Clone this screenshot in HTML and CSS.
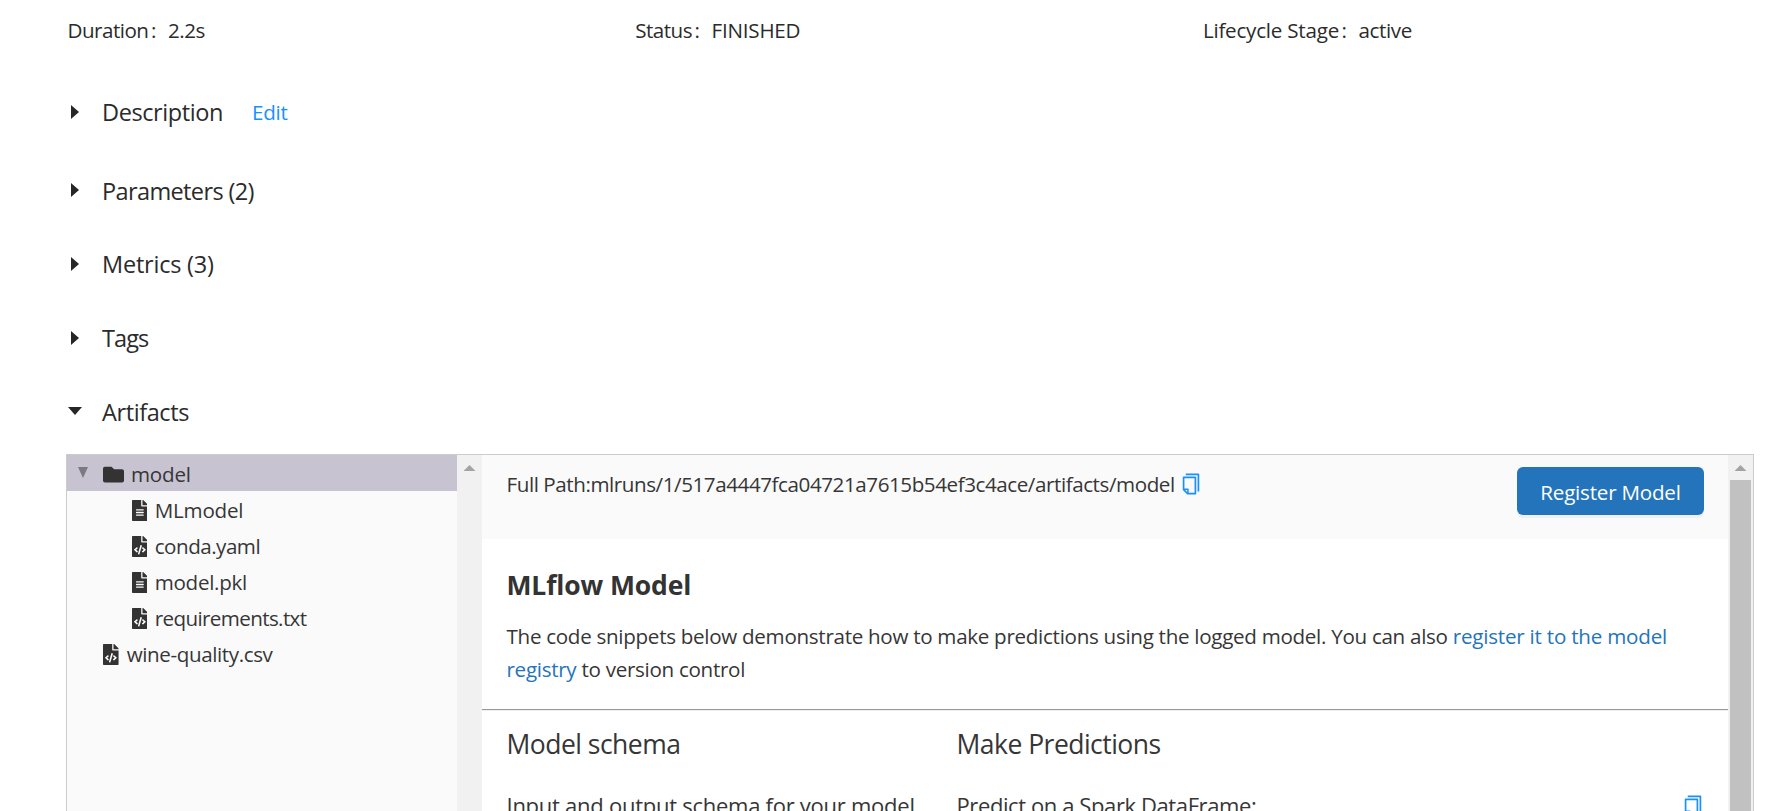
FILE: index.html
```html
<!DOCTYPE html>
<html lang="en">
<head>
<meta charset="utf-8">
<title>MLflow Run</title>
<link rel="stylesheet" href="styles.css">
</head>
<body>
<svg class="defs" width="0" height="0" aria-hidden="true">
  <symbol id="copy" viewBox="0 0 1024 1024"><path d="M832 64H296c-4.400 0-8 3.600-8 8v56c0 4.400 3.600 8 8 8h496v688c0 4.400 3.600 8 8 8h56c4.400 0 8-3.600 8-8V96c0-17.700-14.300-32-32-32zM704 192H192c-17.700 0-32 14.300-32 32v530.700c0 8.500 3.400 16.600 9.400 22.600l173.300 173.300c2.200 2.200 4.700 4 7.400 5.500v1.900h4.200c3.500 1.300 7.200 2 11 2H704c17.700 0 32-14.300 32-32V224c0-17.700-14.300-32-32-32zM350 856.200L263.900 770H350v86.200zM664 888H414V746c0-22.100-17.900-40-40-40H232V264h432v624z"/></symbol>
  <symbol id="folder" viewBox="0 0 512 512"><path d="M464 128H272l-64-64H48C21.490 64 0 85.490 0 112v288c0 26.510 21.490 48 48 48h416c26.510 0 48-21.490 48-48V176c0-26.510-21.490-48-48-48z"/></symbol>
  <symbol id="file" viewBox="0 0 384 512"><path d="M224 136V0H24C10.700 0 0 10.700 0 24v464c0 13.300 10.700 24 24 24h336c13.300 0 24-10.700 24-24V160H248c-13.200 0-24-10.800-24-24zm64 236c0 6.600-5.400 12-12 12H108c-6.600 0-12-5.400-12-12v-8c0-6.600 5.400-12 12-12h168c6.600 0 12 5.400 12 12v8zm0-64c0 6.600-5.400 12-12 12H108c-6.600 0-12-5.400-12-12v-8c0-6.600 5.400-12 12-12h168c6.600 0 12 5.400 12 12v8zm0-72v8c0 6.600-5.400 12-12 12H108c-6.600 0-12-5.400-12-12v-8c0-6.600 5.400-12 12-12h168c6.600 0 12 5.400 12 12zm96-114.100v6.100H256V0h6.100c6.400 0 12.500 2.500 17 7l97.900 98c4.500 4.500 7 10.600 7 16.900z"/></symbol>
  <symbol id="code" viewBox="0 0 384 512"><path d="M384 121.941V128H256V0h6.059c6.365 0 12.470 2.529 16.971 7.029l97.941 97.941A24.005 24.005 0 0 1 384 121.941zM248 160c-13.200 0-24-10.800-24-24V0H24C10.745 0 0 10.745 0 24v464c0 13.255 10.745 24 24 24h336c13.255 0 24-10.745 24-24V160H248zM123.206 400.505a5.400 5.400 0 0 1-7.633.246l-64.866-60.812a5.400 5.400 0 0 1 0-7.879l64.866-60.812a5.400 5.400 0 0 1 7.633.246l19.579 20.885a5.400 5.400 0 0 1-.372 7.747L101.650 336l40.763 35.874a5.400 5.400 0 0 1 .372 7.747l-19.579 20.884zm51.295 50.479l-27.453-7.970a5.402 5.402 0 0 1-3.681-6.692l61.440-211.626a5.402 5.402 0 0 1 6.692-3.681l27.452 7.970a5.400 5.400 0 0 1 3.680 6.692l-61.439 211.626a5.397 5.397 0 0 1-6.691 3.681zm160.792-111.045l-64.866 60.812a5.400 5.400 0 0 1-7.633-.246l-19.580-20.885a5.400 5.400 0 0 1 .372-7.747L284.350 336l-40.763-35.874a5.400 5.400 0 0 1-.372-7.747l19.580-20.885a5.400 5.400 0 0 1 7.633-.246l64.866 60.812a5.400 5.400 0 0 1-.001 7.879z"/></symbol>
</svg>
<main class="page">
  <div class="meta">
    <div class="meta-item"><span class="t5">Duration</span><span class="colon">:</span><span class="t5">2.2s</span></div>
    <div class="meta-item"><span class="t5">Status</span><span class="colon">:</span><span class="t2">FINISHED</span></div>
    <div class="meta-item"><span class="t2">Lifecycle Stage</span><span class="colon">:</span><span class="t4">active</span></div>
  </div>

  <div class="section description"><i class="caret"></i><span class="t4">Description</span><a class="edit">Edit</a></div>
  <div class="section parameters"><i class="caret"></i><span class="t6">Parameters (2)</span></div>
  <div class="section metrics"><i class="caret"></i><span class="t2">Metrics (3)</span></div>
  <div class="section tags"><i class="caret"></i><span class="t9">Tags</span></div>
  <div class="section artifacts"><i class="caret open"></i><span class="t4">Artifacts</span></div>

  <div class="browser">
    <div class="tree">
      <div class="node root selected"><i class="toggle"></i><svg class="folder"><use href="#folder"/></svg><span class="t2">model</span></div>
      <div class="node child"><svg class="file"><use href="#file"/></svg><span class="t2">MLmodel</span></div>
      <div class="node child"><svg class="file"><use href="#code"/></svg><span class="t5">conda.yaml</span></div>
      <div class="node child"><svg class="file"><use href="#file"/></svg><span class="t3">model.pkl</span></div>
      <div class="node child"><svg class="file"><use href="#code"/></svg><span class="t6">requirements.txt</span></div>
      <div class="node top"><svg class="file"><use href="#code"/></svg><span class="t4">wine-quality.csv</span></div>
    </div>
    <div class="scrollbar"><i class="up"></i></div>
    <div class="content">
      <div class="info">
        <div class="path"><span>Full Path:mlruns/1/517a4447fca04721a7615b54ef3c4ace/artifacts/model</span><svg class="copy"><use href="#copy"/></svg></div>
        <button class="register">Register Model</button>
      </div>
      <div class="intro">
        <h2 class="title">MLflow Model</h2>
        <p class="text">The code snippets below demonstrate how to make predictions using the logged model. You can also <a class="link"><span class="t2">register it to the model</span><br>registry</a> to version control</p>
      </div>
      <hr class="rule">
      <div class="columns">
        <div class="schema">
          <h3 class="subtitle">Model schema</h3>
          <div class="note">Input and output schema for your model.</div>
        </div>
        <div class="predict">
          <h3 class="subtitle">Make Predictions</h3>
          <div class="note"><span class="t4">Predict on a Spark DataFrame:</span><svg class="copy"><use href="#copy"/></svg></div>
        </div>
      </div>
    </div>
    <div class="scrollbar"><i class="up"></i><i class="thumb"></i></div>
  </div>
</main>
</body>
</html>
```
FILE: styles.css
```css
* { box-sizing: border-box; }
body {
  margin: 0;
  height: 811px;
  overflow: hidden;
  background: #fff;
  color: #2b2b2b;
  font-family: "Open Sans", "Noto Sans", sans-serif;
  font-size: 20.6px;
}
.defs { display: block; }
svg { fill: currentColor; flex: none; }
.page { display: flex; flex-direction: column; height: 811px; padding: 14px 38px 0 66px; overflow: hidden; }

/* optical tracking */
.t2 { letter-spacing: -0.22px; }
.t3 { letter-spacing: -0.3px; }
.t4 { letter-spacing: -0.4px; }
.t5 { letter-spacing: -0.5px; }
.t6 { letter-spacing: -0.62px; }
.t9 { letter-spacing: -0.9px; }

.meta { display: grid; grid-template-columns: 567.7px 567.7px 1fr; line-height: 32px; flex: none; padding-left: 1.5px; }
.meta-item { display: flex; }
.colon { width: 19.5px; padding-left: 2.5px; }

.section { display: flex; flex: none; height: 36px; line-height: 36px; font-size: 23.5px; }
.section > span { white-space: nowrap; }
.description { margin-top: 48px; }
.parameters { margin-top: 43px; }
.metrics { margin-top: 37px; }
.tags, .artifacts { margin-top: 38px; }
.caret { width: 36px; flex: none; padding: 11px 0 0 5px; }
.parameters .caret { padding-top: 10px; }
.caret::before { content: ""; display: block; width: 8px; height: 14px; background: #262626; clip-path: polygon(0 0, 100% 50%, 0 100%); }
.caret.open { padding: 13px 0 0 2px; }
.caret.open::before { width: 14px; height: 8px; clip-path: polygon(0 0, 100% 0, 50% 100%); }
.edit { margin-left: 29px; font-size: 20.6px; letter-spacing: -0.3px; color: #1890ff; }

.browser { display: flex; flex: 1; min-height: 0; margin-top: 24px; border: 1px solid #ccc; border-bottom: 0; color: #363636; }
.tree { width: 390px; flex: none; background: #fafafa; }
.node { display: flex; height: 36px; padding-top: 2px; line-height: 34px; }
.node svg { margin-top: 7px; color: #333; }
.selected { background: #c7c3d1; }
.toggle { width: 36px; padding: 10px 0 0 11px; }
.toggle::before { content: ""; display: block; width: 10px; height: 11px; background: #7c7a80; clip-path: polygon(0 0, 100% 0, 50% 100%); }
.folder { width: 21px; height: 21px; margin-right: 7px; }
.file { width: 15.75px; height: 21px; margin-right: 7.5px; }
.child { padding-left: 64.5px; }
.top { padding-left: 36px; }
.top .file { margin-right: 8px; }

.scrollbar { width: 25px; flex: none; padding-top: 10px; background: #f1f1f1; }
.up { display: block; width: 12px; height: 6px; margin: 0 auto; background: #a3a3a3; clip-path: polygon(50% 0, 100% 100%, 0 100%); }
.thumb { display: block; width: 21px; height: 331px; margin: 9px auto 0; background: #c1c1c1; }

.content { flex: 1; min-width: 0; overflow: hidden; }
.info { display: flex; justify-content: space-between; height: 84px; padding: 12px 24px 0 24.5px; background: #fafafa; }
.path { display: flex; height: 36px; line-height: 34px; letter-spacing: -0.43px; }
.copy { width: 24px; height: 24px; color: #1890ff; }
.path .copy { margin: 5px 0 0 4px; }
.register {
  width: 187px; height: 48px; padding: 1px 0 0; border: 0; border-radius: 6px;
  background: #2374bb; box-shadow: 0 3px 0 rgba(0, 0, 0, .04);
  color: #fff; font: inherit; letter-spacing: -0.22px;
}
.intro { padding: 26px 24px 23px 24.5px; }
.title { margin: 0; font-size: 26.5px; line-height: 40px; font-weight: 700; letter-spacing: -0.12px; color: #333; }
.text { margin: 15px 0 0; line-height: 33px; white-space: nowrap; letter-spacing: -0.295px; }
.link { color: #2374bb; }
.rule { height: 2px; margin: 0; border: 0; border-top: 1px solid #999; background: #eee; }
.columns { display: grid; grid-template-columns: 450px 1fr; padding: 13px 23px 0 24.5px; }
.subtitle { margin: 0; font-size: 26.5px; line-height: 40px; font-weight: 400; letter-spacing: -0.52px; }
.note { display: flex; justify-content: space-between; margin-top: 23px; font-size: 22px; line-height: 36px; letter-spacing: -0.26px; white-space: nowrap; }
.note .copy { margin-top: 7px; }
```
